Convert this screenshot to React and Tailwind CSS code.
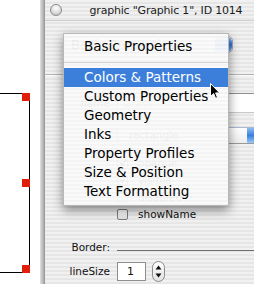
import React from "react";

const stripes =
  "bg-[repeating-linear-gradient(180deg,#f1f1f1_0px,#f1f1f1_2px,#e6e6e6_2px,#e6e6e6_4px)]";

function CheckBox({ checked }) {
  return (
    <div className="w-[11px] h-[11px] shrink-0 rounded-[2px] border border-[#7d7d7d] bg-gradient-to-b from-[#ffffff] to-[#dedede] flex items-center justify-center">
      {checked && (
        <svg width="11" height="11" viewBox="0 0 11 11" className="-mt-[2px] ml-[1px]">
          <path d="M2 5.5 L4.5 8.5 L10 1" fill="none" stroke="#111" strokeWidth="2" />
        </svg>
      )}
    </div>
  );
}

function CheckRow({ label, checked }) {
  return (
    <div className="h-[17px] flex items-center gap-[10px]">
      <CheckBox checked={checked} />
      <span className="text-[10.5px] text-[#111] leading-none">{label}</span>
    </div>
  );
}

function Canvas() {
  return (
    <div className="w-[40px] shrink-0 relative bg-white">
      <div className="absolute left-0 top-[93px] w-[30px] h-px bg-black" />
      <div className="absolute left-0 top-[272px] w-[30px] h-px bg-black" />
      <div className="absolute left-[29px] top-[93px] w-px h-[180px] bg-black" />
      <div className="absolute left-[22px] top-[93px] w-[8px] h-[8px] bg-[#e0200c]" />
      <div className="absolute left-[22px] top-[179px] w-[8px] h-[8px] bg-[#e0200c]" />
      <div className="absolute left-[22px] top-[265px] w-[8px] h-[8px] bg-[#e0200c]" />
    </div>
  );
}

function Window() {
  return (
    <div className={`w-[210px] shrink-0 overflow-hidden flex flex-col border-l border-[#9a9a9a] ${stripes}`}>
      <div className="h-[21px] shrink-0 flex items-center border-b border-[#cfcfcf]">
        <div className="ml-[5px] w-[12px] h-[12px] shrink-0 rounded-full border border-[#8a8a8a] bg-[radial-gradient(circle_at_50%_30%,#ffffff_0%,#e4e4e4_45%,#b9b9b9_100%)]" />
        <div className="flex-1 pl-[16px] text-center text-[11px] tracking-[-0.2px] text-[#1c1c1c] whitespace-nowrap leading-none">
          graphic "Graphic 1", ID 1014
        </div>
      </div>

      {/* popup button (behind menu) */}
      <div className="mt-[15px] ml-[20px] w-[168px] h-[17px] shrink-0 flex rounded-[5px] border border-[#a8a8a8] bg-gradient-to-b from-[#ffffff] to-[#e9e9e9] overflow-hidden">
        <div className="flex-1 flex items-center pl-[5px] text-[13px] text-[#222] leading-none">
          Basic Properties
        </div>
        <div className="w-[17px] bg-gradient-to-b from-[#8fbaf0] via-[#2f76d8] to-[#6fb0f5] rounded-r-[5px]" />
      </div>

      <div className="mt-[21px] h-px shrink-0 bg-[#b4b4b4]" />
      <div className="h-px shrink-0 bg-[#fafafa]" />

      <div className="mt-[17px] h-[20px] flex items-center gap-[7px]">
        <div className="w-[65px] shrink-0 text-right text-[10.5px] text-[#111] leading-none">name</div>
        <div className="w-[180px] shrink-0 h-[20px] border border-[#8e8e8e] border-b-[#c8c8c8] bg-white flex items-center pl-[5px] text-[10.5px] text-[#8a7a30] leading-none">
          Grass
        </div>
      </div>

      <div className="mt-[14px] h-[17px] flex items-center gap-[7px]">
        <div className="w-[65px] shrink-0" />
        <div className="w-[151px] shrink-0 h-[17px] flex rounded-[4px] border border-[#9a9a9a] border-t-[#a9b9cf] bg-gradient-to-b from-[#ffffff] to-[#ececec] overflow-hidden">
          <div className="flex-1 flex items-center pl-[11px] text-[10.5px] text-[#222] leading-none">
            rectangle
          </div>
          <div className="w-[20px] bg-gradient-to-b from-[#8fbaf0] via-[#3a7fdc] to-[#9ac8f7]" />
        </div>
      </div>

      <div className="mt-[11px] ml-[72px] flex flex-col">
        <CheckRow label="opaque" checked />
        <CheckRow label="visible" checked />
        <CheckRow label="disabled" />
        <CheckRow label="showName" />
      </div>

      <div className="mt-[17px] h-[14px] flex items-center gap-[7px]">
        <div className="w-[65px] shrink-0 text-right text-[10.5px] text-[#111] leading-none">Border:</div>
        <div className="flex-1 h-px mt-[6px] bg-[#6e6e6e]" />
      </div>

      <div className="mt-[8px] h-[19px] flex items-center gap-[7px]">
        <div className="w-[65px] shrink-0 text-right text-[10.5px] text-[#111] leading-none">lineSize</div>
        <div className="w-[29px] shrink-0 h-[19px] border border-[#8e8e8e] bg-white flex items-center pl-[9px] text-[11px] text-[#111] leading-none">
          1
        </div>
        <div className="ml-[-1px] shrink-0 w-[13px] h-[21px] rounded-full border border-[#8a8a8a] bg-gradient-to-b from-[#ffffff] to-[#e2e2e2] flex flex-col items-center justify-between py-[3px]">
          <svg width="7" height="5" viewBox="0 0 7 5">
            <path d="M3.5 0.5 L6.5 4.5 L0.5 4.5 Z" fill="#111" />
          </svg>
          <svg width="7" height="5" viewBox="0 0 7 5">
            <path d="M0.5 0.5 L6.5 0.5 L3.5 4.5 Z" fill="#111" />
          </svg>
        </div>
      </div>
    </div>
  );
}

const items = [
  "Custom Properties",
  "Geometry",
  "Inks",
  "Property Profiles",
  "Size & Position",
  "Text Formatting",
];

function Menu() {
  return (
    <div className="absolute left-[63px] top-[33px] w-[166px] h-[173px] border border-[#b8b8b8] shadow-[0_4px_10px_rgba(0,0,0,0.45)] bg-[repeating-linear-gradient(180deg,rgba(251,251,251,0.95)_0px,rgba(251,251,251,0.95)_2px,rgba(244,244,244,0.95)_2px,rgba(244,244,244,0.95)_4px)] flex flex-col pt-[3px] text-[13.5px] text-black leading-none">
      <div className="h-[19px] flex items-center pl-[20px]">Basic Properties</div>
      <div className="h-[12px] flex items-center">
        <div className="w-full h-px bg-[#d2d2d2]" />
      </div>
      <div className="h-[19px] flex items-center pl-[20px] bg-[#3c7fdb] text-white">
        Colors &amp; Patterns
      </div>
      {items.map((t) => (
        <div key={t} className="h-[19px] flex items-center pl-[20px]">
          {t}
        </div>
      ))}
    </div>
  );
}

function Cursor() {
  return (
    <svg width="13" height="18" viewBox="0 0 13 18" className="absolute left-[209px] top-[82px]">
      <path
        d="M1.5 1.5 L1.5 14.5 L4.6 11.6 L6.6 16.3 L8.5 15.5 L6.6 10.9 L10.6 10.9 Z"
        fill="#000"
        stroke="#fff"
        strokeWidth="1"
        strokeLinejoin="round"
      />
    </svg>
  );
}

export default function App() {
  return (
    <div className="w-[254px] h-[284px] overflow-hidden relative flex bg-white font-['DejaVu_Sans',sans-serif]">
      <Canvas />
      <div className="w-[4px] shrink-0 bg-gradient-to-r from-[#e2e2e2] to-[#a9a9a9]" />
      <Window />
      <Menu />
      <Cursor />
    </div>
  );
}
